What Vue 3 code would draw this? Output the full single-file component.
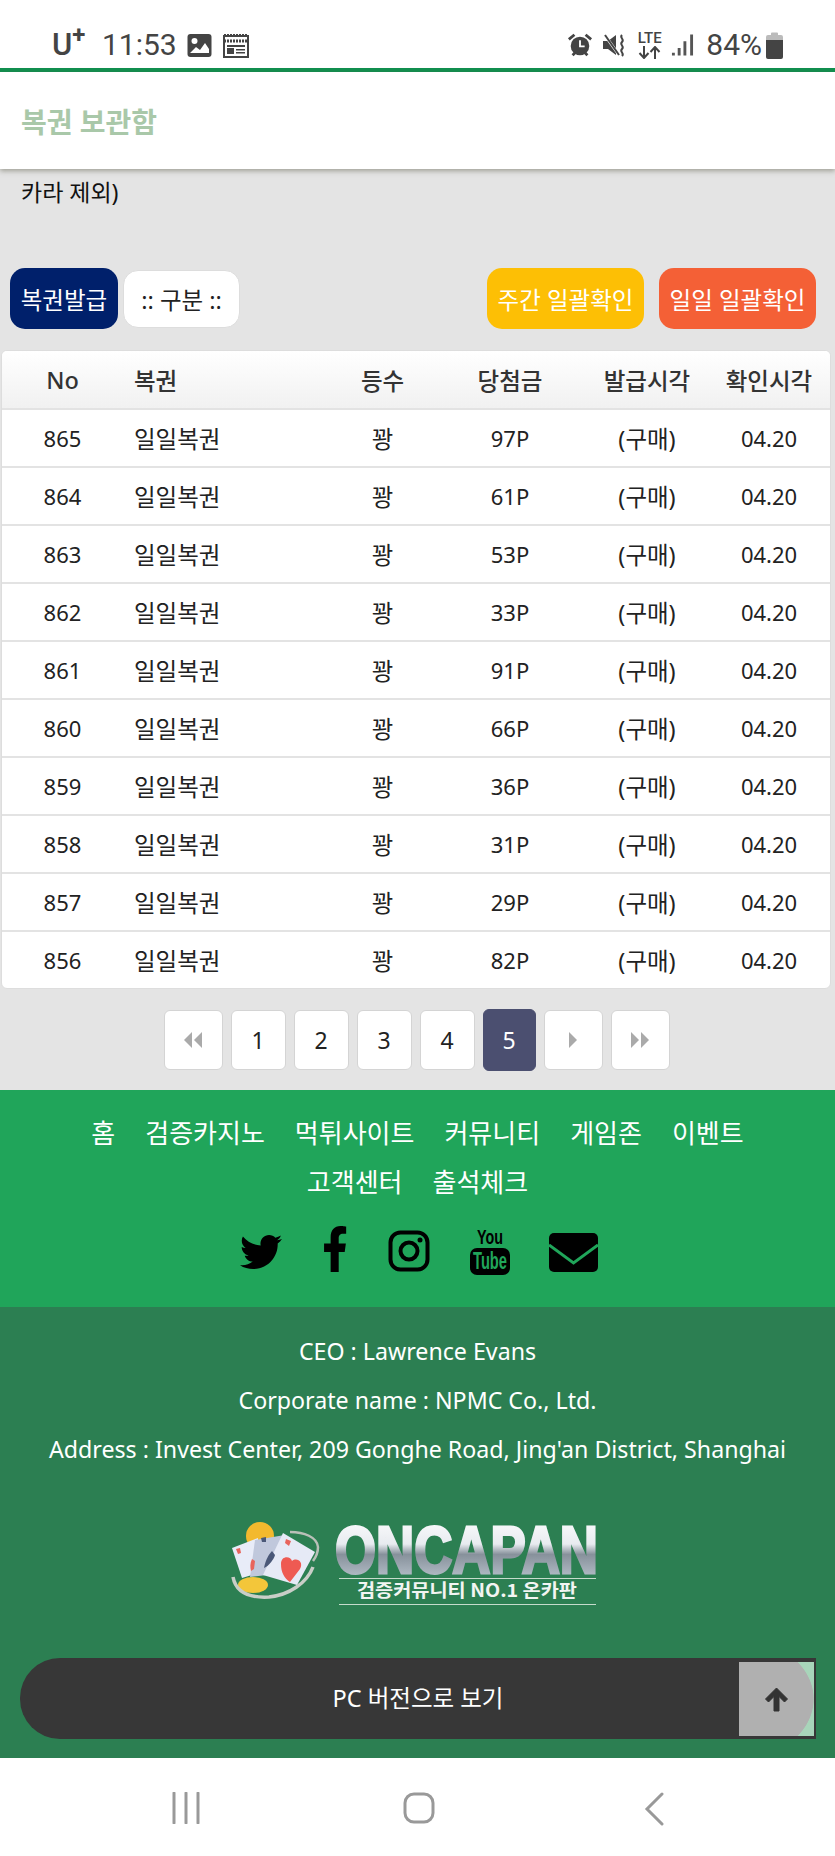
<template>
  <div class="phone">
    <div class="status">
      <div class="status-left">
        <span class="carrier">U<sup>+</sup></span>
        <span class="clock">11:53</span>
        <svg class="st-ic" width="25" height="25" viewBox="0 0 25 25">
          <rect x="0.5" y="1" width="24" height="23" rx="3" fill="#444" />
          <circle cx="7.5" cy="8" r="3" fill="#fff" />
          <path d="M3 20l6-6 4 3 5-7 4 6v4H3z" fill="#fff" />
        </svg>
        <svg class="st-ic" width="26" height="25" viewBox="0 0 26 25">
          <path d="M1 3h24v21H1z" fill="none" stroke="#444" stroke-width="2" />
          <path d="M1 2.500h24M1 8h24" stroke="#444" stroke-width="3" stroke-dasharray="2 1" />
          <path d="M4 12h18v2H4zM4 15h7v6H4zM13 16h9v1.500h-9zM13 19h9v1.500h-9z" fill="#444" />
        </svg>
      </div>
      <div class="status-right">
        <svg width="26" height="28" viewBox="0 0 28 28">
          <circle cx="14" cy="15" r="10" fill="#444" />
          <path d="M14 9v6.500h5" fill="none" stroke="#fff" stroke-width="2" />
          <path d="M2 8l6-5M26 8l-6-5" stroke="#444" stroke-width="3" />
          <path d="M6 25l3-3M22 25l-3-3" stroke="#444" stroke-width="3" />
        </svg>
        <svg width="26" height="26" viewBox="0 0 26 26">
          <path d="M1 9h5l8-6v20l-8-6H1z" fill="#444" />
          <path d="M2 2l15 21" stroke="#fff" stroke-width="3" />
          <path d="M3 3l14 20" stroke="#444" stroke-width="2" />
          <path d="M20 3c-3 3 3 4 0 7s3 4 0 7 3 4 0 7" fill="none" stroke="#444" stroke-width="2" />
        </svg>
        <div class="lte">
          <span>LTE</span>
          <svg width="25" height="13" viewBox="0 0 25 13">
            <path d="M7 0v11M2.500 7l4.500 5 4.500-5M18 13V2M13.500 6L18 1l4.500 5" fill="none" stroke="#444" stroke-width="2" />
          </svg>
        </div>
        <svg class="signal" width="23" height="24" viewBox="0 0 24 24">
          <path d="M1 20h3v3H1zM7 15h3v8H7zM13 8h3v15h-3zM20 1h3v22h-3z" fill="#555" />
        </svg>
        <span class="pct">84%</span>
        <svg width="17" height="27" viewBox="0 0 17 27">
          <path d="M5 1.500a1 1 0 0 1 1-1h5a1 1 0 0 1 1 1V3h3a2 2 0 0 1 2 2v4H0V5a2 2 0 0 1 2-2h3z" fill="#bbb" />
          <path d="M0 8h17v17a2 2 0 0 1-2 2H2a2 2 0 0 1-2-2z" fill="#444" />
        </svg>
      </div>
    </div>

    <header class="top">복권 보관함</header>

    <main class="content">
      <p class="note">카라 제외)</p>

      <div class="toolbar">
        <button class="btn navy">복권발급</button>
        <button class="btn plain">:: 구분 ::</button>
        <span class="spacer"></span>
        <button class="btn yellow">주간 일괄확인</button>
        <button class="btn orange">일일 일괄확인</button>
      </div>

      <div class="table-box">
        <table>
          <colgroup>
            <col class="c-no" />
            <col class="c-name" />
            <col class="c-rank" />
            <col class="c-prize" />
            <col class="c-issue" />
            <col class="c-check" />
          </colgroup>
          <thead>
            <tr>
              <th>No</th>
              <th class="left">복권</th>
              <th>등수</th>
              <th>당첨금</th>
              <th>발급시각</th>
              <th>확인시각</th>
            </tr>
          </thead>
          <tbody>
            <tr v-for="r in rows" :key="r.no">
              <td>{{ r.no }}</td>
              <td class="left kr">일일복권</td>
              <td class="kr">꽝</td>
              <td>{{ r.prize }}P</td>
              <td class="kr">(구매)</td>
              <td>04.20</td>
            </tr>
          </tbody>
        </table>
      </div>

      <div class="pager">
        <a class="pg wide arrow">
          <svg width="20" height="20" viewBox="0 0 20 20"><path d="M9 2v16L1 10zM19 2v16l-8-8z" fill="#aaa" /></svg>
        </a>
        <a class="pg" v-for="p in [1, 2, 3, 4]" :key="p">{{ p }}</a>
        <a class="pg active">5</a>
        <a class="pg wide arrow">
          <svg width="10" height="20" viewBox="0 0 10 20"><path d="M1 2v16l8-8z" fill="#aaa" /></svg>
        </a>
        <a class="pg wide arrow">
          <svg width="20" height="20" viewBox="0 0 20 20"><path d="M1 2v16l8-8zM11 2v16l8-8z" fill="#aaa" /></svg>
        </a>
      </div>
    </main>

    <section class="foot-nav">
      <nav class="links">
        <a v-for="l in links" :key="l">{{ l }}</a>
      </nav>
      <div class="social">
        <svg class="s-tw" width="42" height="42" viewBox="0 0 512 512">
          <path d="M459.37 151.716c.325 4.548.325 9.097.325 13.645 0 138.72-105.583 298.558-298.558 298.558-59.452 0-114.68-17.219-161.137-47.106 8.447.974 16.568 1.299 25.34 1.299 49.055 0 94.213-16.568 130.274-44.832-46.132-.975-84.792-31.188-98.112-72.772 6.498.974 12.995 1.624 19.818 1.624 9.421 0 18.843-1.3 27.614-3.573-48.081-9.747-84.143-51.98-84.143-102.985v-1.299c13.969 7.797 30.214 12.67 47.431 13.319-28.264-18.843-46.781-51.005-46.781-87.391 0-19.492 5.197-37.36 14.294-52.954 51.655 63.675 129.3 105.258 216.365 109.807-1.624-7.797-2.599-15.918-2.599-24.04 0-57.828 46.782-104.934 104.934-104.934 30.213 0 57.502 12.67 76.67 33.137 23.715-4.548 46.456-13.32 66.599-25.34-7.798 24.366-24.366 44.833-46.132 57.827 21.117-2.273 41.584-8.122 60.426-16.243-14.292 20.791-32.161 39.308-52.628 54.253z" />
        </svg>
        <svg class="s-fb" width="24" height="46" viewBox="22 0 298 512" preserveAspectRatio="none">
          <path d="M279.14 288l14.22-92.66h-88.91v-60.13c0-25.35 12.42-50.06 52.24-50.06h40.42V6.26S260.43 0 225.36 0c-73.22 0-121.08 44.38-121.08 124.72v70.62H22.89V288h81.39v224h100.17V288z" />
        </svg>
        <svg class="s-ig" width="42" height="42" viewBox="0 0 42 42">
          <rect x="2.500" y="2.500" width="37" height="37" rx="10" fill="none" stroke="#000" stroke-width="4" />
          <circle cx="21" cy="21" r="8.500" fill="none" stroke="#000" stroke-width="4" />
          <circle cx="32" cy="10" r="2.500" />
        </svg>
        <svg class="s-yt" width="40" height="48" viewBox="0 0 40 48">
          <rect y="21" width="40" height="27" rx="7" />
          <text class="yt" x="7" y="17" textLength="26" lengthAdjust="spacingAndGlyphs">You</text>
          <text class="yt tube" x="3" y="42" textLength="34" lengthAdjust="spacingAndGlyphs">Tube</text>
        </svg>
        <svg class="s-mail" width="49" height="39" viewBox="0 0 49 39">
          <rect width="49" height="39" rx="5" />
          <path d="M0 12l24.500 18L49 12" fill="none" stroke="#20a55a" stroke-width="3" />
        </svg>
      </div>
    </section>

    <footer class="foot-info">
      <p>CEO : Lawrence Evans</p>
      <p>Corporate name : NPMC Co., Ltd.</p>
      <p>Address : Invest Center, 209 Gonghe Road, Jing'an District, Shanghai</p>

      <svg class="logo" width="368" height="104" viewBox="0 -16 368 104">
        <defs>
          <linearGradient id="metal" x1="0" y1="0" x2="0" y2="1">
            <stop offset="0" stop-color="#ffffff" />
            <stop offset="0.42" stop-color="#e8ebf0" />
            <stop offset="0.56" stop-color="#87919b" />
            <stop offset="1" stop-color="#c5cfd9" />
          </linearGradient>
        </defs>
        <circle cx="28" cy="14" r="14" fill="#f3b92e" />
        <ellipse cx="21" cy="63" rx="15" ry="8" fill="#f3c63a" />
        <path d="M0 26l26-10v35l-16 5z" fill="#e8ecf8" />
        <path d="M23 18l30-5-18 40-17 2z" fill="#c0c8dc" />
        <path d="M51 11l32 19-18 33-34-10z" fill="#e6eaf6" />
        <path d="M4 27l4-1 1 5-3 1z" fill="#e8645c" />
        <path d="M29 16l5-1 0 5-4 0z" fill="#4a5878" />
        <path d="M54 17l5 2-2 5-4-3z" fill="#e8645c" />
        <path d="M49 42c0-9 10-8 11-3 5-4 12 1 8 8l-10 13c-6-4-9-10-9-18z" fill="#ee5a52" />
        <path d="M40 29c-4 4-7 11-8 17 5-2 10-9 11-13z" fill="#4a5878" />
        <path d="M20 37c-2 4-2 8-1 12l3-2 1-8z" fill="#e8645c" />
        <path d="M58 10c14 0 27 5 28 15 0 5-2 10-5 14" fill="none" stroke="#b9c0b8" stroke-width="2.500" />
        <path d="M1 55c3 16 18 21 36 20 20-2 38-14 44-30" fill="none" stroke="#c9cec7" stroke-width="3.500" />
        <text class="logo-main" x="103" y="51" textLength="263" lengthAdjust="spacingAndGlyphs" fill="url(#metal)" stroke="url(#metal)" stroke-width="3">ONCAPAN</text>
        <path d="M107 56.500h257M107 82.500h257" stroke="#c6dccc" stroke-width="1" />
        <text class="logo-sub" x="125" y="75" textLength="220" lengthAdjust="spacingAndGlyphs" fill="#f2f5f2">검증커뮤니티 NO.1 온카판</text>
      </svg>

      <div class="pc-bar">
        <span>PC 버전으로 보기</span>
        <a class="to-top">
          <svg width="27" height="27" viewBox="0 0 27 27">
            <path d="M13.500 2L2.500 13l3 3 5.500-5.500V25h5V10.500L21.500 16l3-3z" fill="#333" stroke="#333" stroke-width="1" stroke-linejoin="round" />
          </svg>
        </a>
      </div>
    </footer>

    <div class="sysnav">
      <svg width="30" height="32" viewBox="0 0 30 32">
        <path d="M3 1v30M15 1v30M27 1v30" stroke="#999" stroke-width="3" stroke-linecap="round" />
      </svg>
      <svg width="32" height="32" viewBox="0 0 32 32">
        <rect x="2" y="2" width="28" height="28" rx="9" fill="none" stroke="#999" stroke-width="3" />
      </svg>
      <svg width="20" height="34" viewBox="0 0 20 34">
        <path d="M18 2L3 17l15 15" fill="none" stroke="#999" stroke-width="3" stroke-linecap="round" />
      </svg>
    </div>
  </div>
</template>

<script setup>
const prizes = [97, 61, 53, 33, 91, 66, 36, 31, 29, 82]
const rows = prizes.map((prize, i) => ({ no: 865 - i, prize }))

const links = ['홈', '검증카지노', '먹튀사이트', '커뮤니티', '게임존', '이벤트', '고객센터', '출석체크']
</script>

<style>
html, body { margin: 0; background: #fff; }
</style>

<style scoped>
* { box-sizing: border-box; }
p { margin: 0; }
a { color: inherit; text-decoration: none; }

.phone {
  width: 835px;
  height: 1856px;
  overflow: hidden;
  font-family: "Noto Sans", "Noto Sans CJK KR", sans-serif;
  background: #fff;
  color: #222;
}

.status {
  height: 72px;
  padding: 30px 52px 4px 52px;
  display: flex;
  justify-content: space-between;
  align-items: flex-start;
  border-bottom: 4px solid #11904f;
  color: #444;
  font-family: Roboto, sans-serif;
}
.status-left, .status-right { display: flex; align-items: center; height: 30px; }
.carrier { font-size: 31px; font-weight: 500; width: 50px; line-height: 30px; }
.carrier sup { font-size: 24px; line-height: 0; vertical-align: 12px; font-weight: 700; }
.clock { font-size: 30px; line-height: 30px; margin-right: 10px; }
.st-ic { margin-right: 11px; }
.status-right { gap: 9px; }
.lte { display: flex; flex-direction: column; align-items: center; font-size: 15px; font-weight: 500; line-height: 15px; }
.lte span { display: block; }
.signal { margin-right: 3px; }
.pct { font-size: 30px; line-height: 30px; margin-right: -5px; }

.top {
  position: relative;
  z-index: 2;
  height: 97px;
  padding: 0 21px;
  display: flex;
  align-items: center;
  font-size: 28px;
  font-weight: 700;
  color: #a9c8a9;
  background: #fff;
  box-shadow: 0 2px 5px rgba(90, 90, 70, 0.5);
}

.content { height: 921px; background: #e4e4e4; }

.note {
  height: 99px;
  padding: 5px 21px 0;
  font-size: 23px;
  line-height: 36px;
  color: #111;
}

.toolbar {
  display: flex;
  align-items: center;
  gap: 5px;
  height: 61px;
  padding: 0 19px 0 10px;
}
.spacer { flex: 1; }
.btn {
  height: 61px;
  border: 0;
  border-radius: 15px;
  font-family: inherit;
  font-size: 23.5px;
  padding: 0;
  color: #fff;
}
.navy { width: 108px; background: #00206b; }
.plain { width: 117px; height: 58px; background: #fff; color: #222; border: 1px solid #ddd; }
.yellow { width: 157px; background: #fdbf05; margin-right: 10px; }
.orange { width: 157px; background: #f46036; }

.table-box {
  margin: 21px 4px 0 1px;
  background: #fff;
  border-radius: 6px;
  border: 1px solid #ddd;
  overflow: hidden;
}
table { width: 100%; border-collapse: collapse; table-layout: fixed; }
.c-no { width: 121px; }
.c-name { width: 196px; }
.c-rank { width: 127px; }
.c-prize { width: 128px; }
.c-issue { width: 146px; }
th, td { text-align: center; padding: 0; font-size: 22px; font-weight: 400; color: #222; }
th {
  height: 58px;
  font-size: 23.5px;
  font-weight: 500;
  color: #333;
  background: linear-gradient(#fff, #f1f1f1);
  border-bottom: 2px solid #e3e3e3;
}
td { height: 58px; border-bottom: 2px solid #e3e3e3; }
td.kr { font-size: 23.5px; }
tr:last-child td { border-bottom: 0; height: 57px; }
th:last-child, td:last-child { padding-right: 12px; }
.left { text-align: left; padding-left: 11px; }

.pager {
  display: flex;
  justify-content: center;
  align-items: center;
  gap: 8px;
  margin-top: 20px;
  padding-right: 2px;
}
.pg {
  width: 55px;
  height: 60px;
  display: flex;
  align-items: center;
  justify-content: center;
  background: #fff;
  border: 1px solid #d4d4d4;
  border-radius: 6px;
  font-size: 23px;
  color: #222;
}
.wide { width: 59px; }
.active { width: 53px; height: 62px; background: #4b4f70; border-color: #4b4f70; color: #fff; }

.foot-nav {
  height: 217px;
  padding-top: 19px;
  background: #20a55a;
}
.links {
  display: flex;
  flex-wrap: wrap;
  justify-content: center;
  column-gap: 30px;
  padding: 0 80px;
  font-size: 26px;
  line-height: 49px;
  color: #fff;
}
.social {
  display: flex;
  justify-content: center;
  align-items: center;
  height: 50px;
  margin-top: 19px;
  padding-left: 2px;
  color: #000;
}
.s-tw { margin-right: 42px; margin-top: 2px; }
.s-fb { margin-right: 40px; margin-top: -4px; }
.s-ig { margin-right: 40px; }
.s-yt { overflow: visible; }
.s-mail { margin-left: 39px; margin-top: 3px; }
.yt { font-family: "Liberation Sans", sans-serif; font-weight: 700; font-size: 21px; }
.tube { fill: #20a55a; font-size: 23px; }

.foot-info {
  height: 451px;
  padding-top: 20px;
  background: #2c7f52;
  color: #fff;
  text-align: center;
  font-size: 23.2px;
  line-height: 49px;
}
.logo { display: block; margin: 32px 0 0 232px; overflow: visible; }
.logo-main { font-family: "Liberation Sans", sans-serif; font-weight: 700; font-size: 66px; }
.logo-sub { font-family: "Noto Sans CJK KR", sans-serif; font-weight: 700; font-size: 18px; }

.pc-bar {
  position: relative;
  height: 81px;
  margin: 48px 19px 0 20px;
  border-radius: 40px 0 0 40px;
  background: #373737;
  display: flex;
  align-items: center;
  justify-content: center;
  font-size: 23.5px;
}
.to-top {
  position: absolute;
  right: 2px;
  top: 4px;
  width: 75px;
  height: 74px;
  display: flex;
  align-items: center;
  justify-content: center;
  background: radial-gradient(ellipse 75px 60px at 0 50%, #b0b0b0 99%, #a8d5ba 100%);
  background-color: #a8d5ba;
}

.sysnav {
  height: 98px;
  display: grid;
  grid-template-columns: 232px 241px 20px;
  padding: 34px 0 0 171px;
  align-items: start;
}
</style>
